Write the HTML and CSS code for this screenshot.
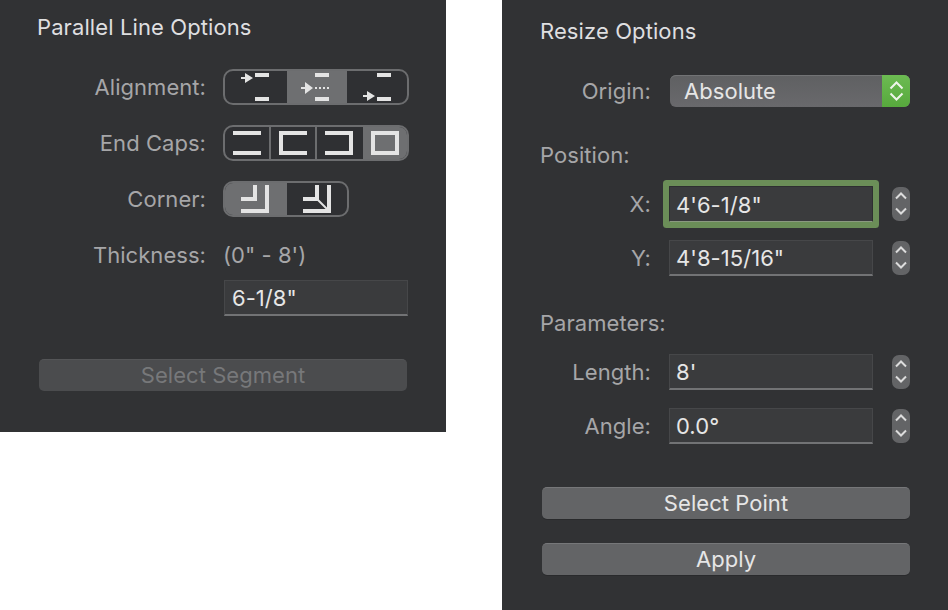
FILE: index.html
```html
<!DOCTYPE html>
<html lang="en">
<head>
<meta charset="utf-8">
<title>Options</title>
<link rel="stylesheet" href="styles.css">
</head>
<body>
<section class="panel panel-left">
  <h2 class="title">Parallel Line Options</h2>
  <div class="row row-seg">
    <span class="label">Alignment:</span>
    <div class="seg">
      <div class="cell w62"><svg width="62" height="32" viewBox="0 0 62 32"><path class="ic" d="M30 2h14v4H30zM30 26h14v4H30zM16 6h4V2l8 5-8 5V8h-4z"/></svg></div>
      <div class="cell w60 on"><svg width="60" height="32" viewBox="0 0 60 32"><path class="ic" d="M28 2h14v4H28zM28 26h14v4H28zM14 16h4v-5l8 6-8 6v-5h-4zM28 16h2v2h-2zM32 16h2v2h-2zM36 16h2v2h-2zM40 16h2v2h-2z"/></svg></div>
      <div class="cell w60"><svg width="60" height="32" viewBox="0 0 60 32"><path class="ic" d="M30 2h14v4H30zM30 26h14v4H30zM16 24h4v-4l8 5-8 5v-4h-4z"/></svg></div>
    </div>
  </div>
  <div class="row row-seg">
    <span class="label">End Caps:</span>
    <div class="seg">
      <div class="cell w44 div"><svg width="44" height="32" viewBox="0 0 44 32"><path class="ic" d="M8 4h28v4H8zM8 24h28v4H8z"/></svg></div>
      <div class="cell w44 div"><svg width="44" height="32" viewBox="0 0 44 32"><path class="ic" d="M8 4h28v4H12v16h24v4H8z"/></svg></div>
      <div class="cell w46"><svg width="46" height="32" viewBox="0 0 46 32"><path class="ic" d="M8 4h28v24H8v-4h24V8H8z"/></svg></div>
      <div class="cell w44 on"><svg width="44" height="32" viewBox="0 0 44 32"><path class="ic" fill-rule="evenodd" d="M8 4h28v24H8zM12 8v16h20V8z"/></svg></div>
    </div>
  </div>
  <div class="row row-seg">
    <span class="label">Corner:</span>
    <div class="seg seg-short">
      <div class="cell w62 on"><svg width="62" height="32" viewBox="0 0 62 32"><path class="ic" d="M40 2h4v28H16v-4h24zM28 2h4v16H16v-4h12z"/></svg></div>
      <div class="cell w60"><svg width="60" height="32" viewBox="0 0 60 32"><path class="ic" d="M40 2h4v28H16v-4h24zM28 2h4v16H16v-4h12z"/><path class="ic-line" d="M31 17l9 9"/></svg></div>
    </div>
  </div>
  <div class="row row-seg row-last">
    <span class="label">Thickness:</span>
    <span class="label range">(0" - 8')</span>
  </div>
  <div class="field field-thick">6-1/8"</div>
  <div class="btn btn-disabled">Select Segment</div>
</section>

<section class="panel panel-right">
  <h2 class="title">Resize Options</h2>
  <div class="frow frow-origin">
    <span class="flabel">Origin:</span>
    <div class="select">
      <span class="select-text">Absolute</span>
      <span class="select-arrows"><svg width="28" height="32" viewBox="0 0 28 32"><path class="chev" d="M8.5 13.5l6-6 6 6M8.5 18.5l6 6 6-6"/></svg></span>
    </div>
  </div>
  <div class="section section-pos">Position:</div>
  <div class="frow frow-first">
    <span class="flabel">X:</span>
    <div class="field field-wide focus">4'6-1/8"</div>
    <span class="stepper"><svg width="18" height="34" viewBox="0 0 18 34"><path class="chev chev-sm" d="M4 11.5l5-5 5 5M4 21.5l5 5 5-5"/></svg></span>
  </div>
  <div class="frow frow-next">
    <span class="flabel">Y:</span>
    <div class="field field-wide">4'8-15/16"</div>
    <span class="stepper"><svg width="18" height="34" viewBox="0 0 18 34"><path class="chev chev-sm" d="M4 11.5l5-5 5 5M4 21.5l5 5 5-5"/></svg></span>
  </div>
  <div class="section section-param">Parameters:</div>
  <div class="frow frow-len">
    <span class="flabel">Length:</span>
    <div class="field field-wide">8'</div>
    <span class="stepper"><svg width="18" height="34" viewBox="0 0 18 34"><path class="chev chev-sm" d="M4 11.5l5-5 5 5M4 21.5l5 5 5-5"/></svg></span>
  </div>
  <div class="frow frow-next">
    <span class="flabel">Angle:</span>
    <div class="field field-wide">0.0°</div>
    <span class="stepper"><svg width="18" height="34" viewBox="0 0 18 34"><path class="chev chev-sm" d="M4 11.5l5-5 5 5M4 21.5l5 5 5-5"/></svg></span>
  </div>
  <div class="btn btn-point">Select Point</div>
  <div class="btn btn-apply">Apply</div>
</section>
</body>
</html>
```
FILE: styles.css
```css
* { box-sizing: border-box; }
html, body { margin: 0; padding: 0; }
body {
  width: 948px;
  height: 610px;
  background: #fff;
  display: flex;
  justify-content: space-between;
  align-items: flex-start;
  overflow: hidden;
  font-family: Inter, "Liberation Sans", sans-serif;
  font-size: 22px;
  letter-spacing: 0.05px;
}
.panel { width: 446px; background: #313234; }
.panel-left { height: 432px; padding: 12px 0 0 38px; }
.panel-right { height: 610px; padding: 16px 0 0 38px; }
.title {
  margin: 0;
  height: 30px;
  line-height: 30px;
  font-size: 22px;
  font-weight: 400;
  color: #dfdfe0;
  letter-spacing: 0.1px;
}
.panel-left .title { margin-left: -1px; }

.row { display: flex; align-items: center; height: 36px; margin-bottom: 20px; }
.row:first-of-type { margin-top: 27px; }
.row-last { margin-bottom: 7px; }
.label { width: 168px; text-align: right; color: #a6a6a8; line-height: 37px; flex: none; }
.range { width: auto; margin-left: 17px; text-align: left; }

.seg {
  display: flex;
  margin-left: 17px;
  width: 186px;
  height: 36px;
  border: 2px solid #6c6d6f;
  border-radius: 10px;
  overflow: hidden;
  background: #2f3033;
}
.seg-short { width: 126px; }
.cell { height: 32px; flex: none; }
.cell svg { display: block; }
.w62 { width: 62px; }
.w60 { width: 60px; }
.w44 { width: 44px; }
.w46 { width: 46px; }
.div { width: 46px; border-right: 2px solid #6c6d6f; }
.on { background: #6e6f71; }
.ic { fill: #e4e4e4; }
.ic-line { stroke: #e4e4e4; stroke-width: 2; fill: none; }

.field {
  height: 36px;
  line-height: 35px;
  padding-left: 7px;
  background: #3a3b3d;
  border: 1px solid #464749;
  border-bottom: 2px solid #727375;
  color: #e6e6e6;
}
.field-thick { width: 184px; margin: 0 0 0 186px; }
.field-wide { width: 204px; flex: none; padding-left: 6px; }
.focus {
  border-radius: 1px;
  border: 1px solid #2e2f31;
  border-bottom: 1px solid #8a9a80;
  box-shadow: 0 0 0 6px #6b8e58;
  line-height: 36px;
}

.btn {
  height: 32px;
  line-height: 31px;
  text-align: center;
  border-radius: 5px;
  background: #636466;
  border-top: 1px solid #767779;
  box-shadow: 0 1px 0 #292a2c;
  color: #e6e6e6;
}
.btn-disabled {
  width: 368px;
  margin: 43px 0 0 1px;
  background: #4b4c4e;
  border-top: 1px solid #545557;
  box-shadow: none;
  color: #77787a;
}
.btn-point { width: 368px; margin: 43px 0 0 2px; }
.btn-apply { width: 368px; margin: 24px 0 0 2px; }

.frow { display: flex; align-items: center; height: 36px; line-height: 37px; }
.flabel { width: 111px; text-align: right; color: #a6a6a8; flex: none; margin-right: 18px; }
.frow-origin { height: 32px; margin-top: 29px; }
.frow-origin .flabel { margin-right: 19px; }
.frow-first { margin-top: 17px; }
.frow-next { margin-top: 18px; }
.frow-len { margin-top: 17px; }

.section { height: 28px; line-height: 28px; color: #a6a6a8; }
.section-pos { margin-top: 34px; }
.section-param { margin-top: 33px; }

.select {
  width: 240px;
  height: 32px;
  display: flex;
  justify-content: space-between;
  background: linear-gradient(#5f6062, #69696c);
  border-radius: 6px;
  overflow: hidden;
  box-shadow: inset 0 1px 0 #727375;
  color: #e6e6e6;
}
.select-text { padding-left: 14px; line-height: 32px; }
.select-arrows { width: 28px; height: 32px; background: linear-gradient(#6cbb52, #57a93d); }
.select-arrows svg { display: block; }
.chev { fill: none; stroke: #eef5ea; stroke-width: 2; }
.chev-sm { stroke: #dcdcdc; }

.stepper {
  width: 18px;
  height: 34px;
  margin-left: 19px;
  background: #636466;
  border-radius: 7px;
  flex: none;
}
.stepper svg { display: block; }
```
